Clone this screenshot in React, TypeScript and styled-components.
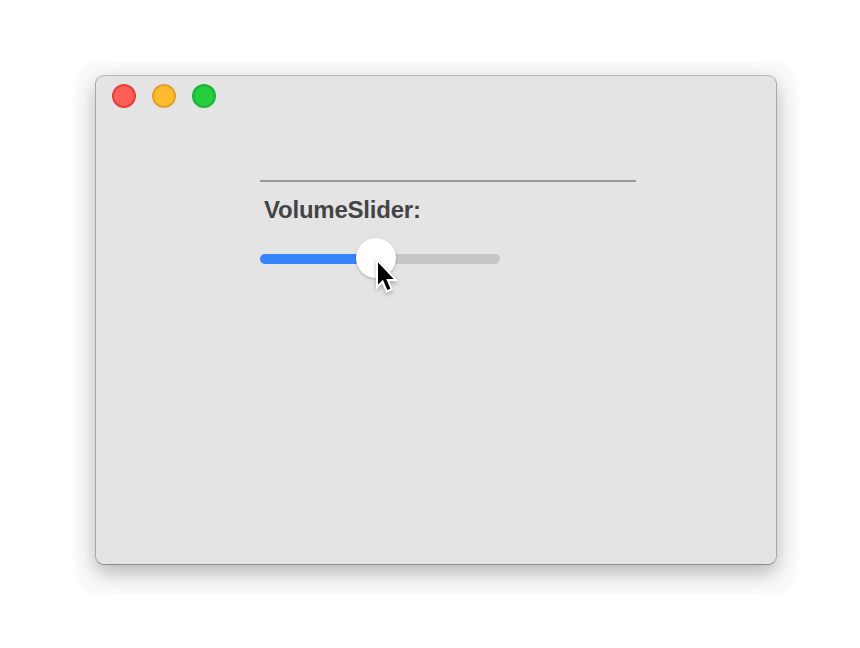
import React from "react";
import styled, { createGlobalStyle } from "styled-components";

const GlobalStyle = createGlobalStyle`
  body { margin: 0; background: #fff; overflow: hidden; }
  *, *::before, *::after { box-sizing: border-box; }
`;

const Desktop = styled.main`
  width: 860px;
  height: 648px;
  padding: 75px 83px 83px 95px;
  background: #fff;
`;

const Window = styled.section`
  width: 682px;
  height: 490px;
  border: 1px solid #a9a9a9;
  border-top-color: #b5b5b5;
  border-bottom-color: #8c8c8c;
  border-radius: 9px;
  background: #e4e4e4;
  box-shadow: 0 8px 20px rgba(0, 0, 0, 0.27), 0 8px 2px 22px rgba(0, 0, 0, 0.018);
`;

const TitleBar = styled.header`
  display: flex;
  gap: 16px;
  height: 44px;
  padding: 8px 16px;
`;

const WindowButton = styled.button<{ $fill: string; $edge: string }>`
  width: 24px;
  height: 24px;
  padding: 0;
  border: 2px solid ${(p) => p.$edge};
  border-radius: 50%;
  background: ${(p) => p.$fill};
`;

const Content = styled.div`
  width: 376px;
  margin: 60px 0 0 164px;
`;

const Divider = styled.hr`
  height: 2px;
  margin: 0;
  border: 0;
  background: #999;
`;

const Label = styled.div`
  height: 28px;
  margin-top: 14px;
  padding-left: 4px;
  color: #444;
  font: bold 24px/28px "Liberation Sans", Arial, sans-serif;
  letter-spacing: -0.22px;
`;

const Track = styled.div`
  position: relative;
  width: 240px;
  height: 10px;
  margin-top: 30px;
  border-radius: 5px;
  background: #c6c6c6;
`;

const Fill = styled.div`
  width: 115px;
  height: 10px;
  border-radius: 5px 0 0 5px;
  background: #3684fb;
`;

const Thumb = styled.div`
  position: absolute;
  left: 95.5px;
  top: -16px;
  width: 40px;
  height: 40px;
  border-radius: 50%;
  background: #fff;
  box-shadow: 0 1px 3px rgba(0, 0, 0, 0.25);
`;

const Cursor = styled.svg`
  position: absolute;
  left: 110px;
  top: 0;
  overflow: visible;
  filter: drop-shadow(0 2px 2px rgba(0, 0, 0, 0.25));
`;

export default function App() {
  return (
    <Desktop>
      <GlobalStyle />
      <Window>
        <TitleBar>
          <WindowButton $fill="#ff5f57" $edge="#e2403c" aria-label="Close" />
          <WindowButton $fill="#ffbb2e" $edge="#dfa02c" aria-label="Minimize" />
          <WindowButton $fill="#25cd41" $edge="#20b238" aria-label="Zoom" />
        </TitleBar>
        <Content>
          <Divider />
          <Label>VolumeSlider:</Label>
          <Track>
            <Fill />
            <Thumb />
            <Cursor width="32" height="44" viewBox="0 0 32 44" aria-hidden="true">
              <path
                d="M7 5.7V33L12.6 27.5L16.8 37.4L21.7 35.2L17.8 26H26Z"
                fill="#000"
                stroke="#fff"
                strokeWidth="2"
              />
            </Cursor>
          </Track>
        </Content>
      </Window>
    </Desktop>
  );
}
